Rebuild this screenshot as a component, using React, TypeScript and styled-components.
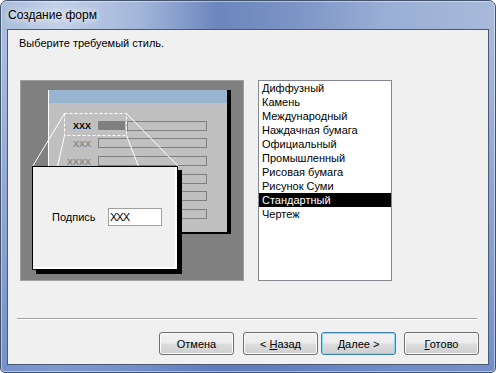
import React from 'react';
import styled, { createGlobalStyle, css } from 'styled-components';

const GlobalStyle = createGlobalStyle`
  html, body {
    margin: 0;
    padding: 0;
    background: #ffffff;
  }
  body {
    font-family: 'Liberation Sans', Arial, sans-serif;
  }
`;

const Window = styled.div`
  box-sizing: border-box;
  width: 496px;
  height: 373px;
  border: 1px solid #43536b;
  border-radius: 7px 7px 5px 5px;
  background:
    linear-gradient(to bottom, rgba(90, 125, 195, 0) 0, rgba(90, 125, 195, 0) 40px, rgba(80, 115, 190, 0.6) 100%),
    linear-gradient(to right, #a8bbdb 0%, #c3d1e8 11%, #a3b6da 28%, #6c86bc 44%, #7a92c4 58%, #9aafd5 78%, #a8bada 100%);
  box-shadow: inset 0 0 0 1px rgba(255, 255, 255, 0.45);
  display: flex;
  flex-direction: column;
  overflow: hidden;
`;

const TitleBar = styled.div`
  height: 28px;
  display: flex;
  align-items: center;
  padding: 0 0 1px 7px;
  box-sizing: border-box;
  font-size: 12px;
  color: #000;
  text-shadow: 0 0 6px rgba(255, 255, 255, 0.9), 0 0 10px rgba(255, 255, 255, 0.8);
`;

const Client = styled.div`
  box-sizing: border-box;
  height: 336px;
  margin: 0 6px;
  border: 1px solid #4a5a73;
  background: #f0f0f0;
  display: flex;
  flex-direction: column;
  font-size: 11px;
  color: #000;
`;

const Prompt = styled.div`
  padding: 7px 0 0 11px;
  line-height: 13px;
`;

const Main = styled.div`
  display: flex;
  margin-top: 30px;
  padding-left: 12px;
  height: 201px;
`;

const Preview = styled.div`
  width: 224px;
  height: 201px;
  svg {
    display: block;
  }
`;

const StyleList = styled.ul`
  list-style: none;
  margin: 0 0 0 14px;
  padding: 0;
  box-sizing: border-box;
  width: 134px;
  height: 201px;
  border: 1px solid #828790;
  background: #ffffff;
`;

const StyleItem = styled.li<{ $selected?: boolean }>`
  height: 14px;
  line-height: 14px;
  padding-left: 3px;
  white-space: nowrap;
  ${(p) =>
    p.$selected &&
    css`
      background: #000000;
      color: #ffffff;
    `}
`;

const Separator = styled.div`
  margin: 37px 11px 0 9px;
  height: 1px;
  background: #a0a0a0;
  border-bottom: 1px solid #ffffff;
`;

const ButtonRow = styled.div`
  display: flex;
  justify-content: flex-end;
  margin-top: 12px;
  padding-right: 9px;
`;

const Button = styled.button<{ $default?: boolean; $gap: number }>`
  box-sizing: border-box;
  width: 75px;
  height: 23px;
  margin: 0 0 0 ${(p) => p.$gap}px;
  padding: 0;
  font-family: 'Liberation Sans', Arial, sans-serif;
  font-size: 11px;
  color: #000;
  border: 1px solid ${(p) => (p.$default ? '#3c7fb1' : '#707070')};
  border-radius: 3px;
  background: linear-gradient(to bottom, #f2f2f2 0%, #ebebeb 48%, #dddddd 52%, #cfcfcf 100%);
  box-shadow: inset 0 0 0 1px ${(p) => (p.$default ? '#7fdcff' : '#fbfbfb')};
`;

const styles = [
  'Диффузный',
  'Камень',
  'Международный',
  'Наждачная бумага',
  'Официальный',
  'Промышленный',
  'Рисовая бумага',
  'Рисунок Суми',
  'Стандартный',
  'Чертеж',
];

const rowTops = [41, 58, 76, 94, 111, 129];

function FormPreview() {
  return (
    <svg width="224" height="201" viewBox="0 0 224 201">
      <rect x="0.5" y="0.5" width="223" height="200" fill="#808080" stroke="#a0a0a0" />
      {/* form page */}
      <rect x="28" y="10" width="183" height="144" fill="#000000" />
      <rect x="28" y="10" width="179" height="142" fill="#c0c0c0" />
      <rect x="28" y="10" width="1" height="142" fill="#ffffff" />
      <rect x="29" y="10" width="178" height="13" fill="#99b4d1" />
      {rowTops.map((y, i) =>
        i === 0 ? (
          <g key={y}>
            <rect x="78" y={y} width="27" height="9" fill="#808080" />
            <rect x="107.5" y={y + 0.5} width="79" height="9" fill="none" stroke="#808080" />
          </g>
        ) : (
          <rect key={y} x="78.5" y={y + 0.5} width="108" height="9" fill="none" stroke="#808080" />
        )
      )}
      <text x="71" y="49" textAnchor="end" fontSize="9" fontWeight="bold" fill="#000" fontFamily="Liberation Sans, Arial, sans-serif">XXX</text>
      <text x="71" y="67" textAnchor="end" fontSize="9" fontWeight="bold" fill="#8a8a8a" fontFamily="Liberation Sans, Arial, sans-serif">XXX</text>
      <text x="71" y="85" textAnchor="end" fontSize="9" fontWeight="bold" fill="#8a8a8a" fontFamily="Liberation Sans, Arial, sans-serif">XXXX</text>
      {/* zoom callout */}
      <rect x="44.5" y="33.5" width="62" height="22" fill="none" stroke="#ffffff" strokeDasharray="3 2" />
      <g stroke="#ffffff" strokeWidth="1">
        <line x1="44.5" y1="33.5" x2="12.5" y2="86.5" />
        <line x1="44.5" y1="55.5" x2="37.5" y2="86.5" />
        <line x1="106.5" y1="33.5" x2="158.5" y2="86.5" />
        <line x1="106.5" y1="55.5" x2="118.5" y2="86.5" />
      </g>
      <rect x="16" y="90" width="146" height="104" fill="#000000" />
      <rect x="12.5" y="86.5" width="145" height="103" fill="#ffffff" stroke="#000000" />
      <rect x="13" y="87" width="142" height="100" fill="#f0f0f0" />
      <text x="32" y="141" fontSize="11" fill="#000" fontFamily="Liberation Sans, Arial, sans-serif">Подпись</text>
      <rect x="88.5" y="128.5" width="53" height="17" fill="#ffffff" stroke="#a0a0a0" />
      <text x="90" y="141" fontSize="11" fill="#000" fontFamily="Liberation Sans, Arial, sans-serif" letterSpacing="-1">XXX</text>
    </svg>
  );
}

export default function App() {
  return (
    <>
      <GlobalStyle />
      <Window>
        <TitleBar>Создание форм</TitleBar>
        <Client>
          <Prompt>Выберите требуемый стиль.</Prompt>
          <Main>
            <Preview>
              <FormPreview />
            </Preview>
            <StyleList>
              {styles.map((s) => (
                <StyleItem key={s} $selected={s === 'Стандартный'}>
                  {s}
                </StyleItem>
              ))}
            </StyleList>
          </Main>
          <Separator />
          <ButtonRow>
            <Button $gap={0}>Отмена</Button>
            <Button $gap={9}>
              &lt; <u>Н</u>азад
            </Button>
            <Button $gap={3} $default>
              <u>Д</u>алее &gt;
            </Button>
            <Button $gap={8}>
              <u>Г</u>отово
            </Button>
          </ButtonRow>
        </Client>
      </Window>
    </>
  );
}
